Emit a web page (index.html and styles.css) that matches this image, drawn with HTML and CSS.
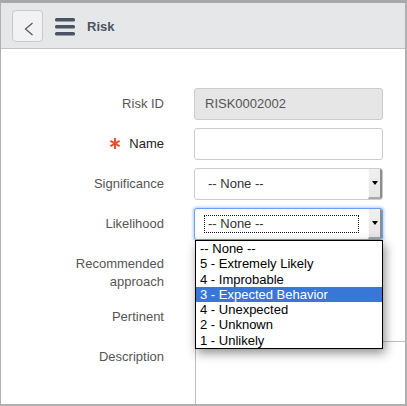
FILE: index.html
```html
<!DOCTYPE html>
<html>
<head>
<meta charset="utf-8">
<link rel="stylesheet" href="styles.css">
</head>
<body>
<div class="frame">
  <header class="header">
    <button class="back" type="button" aria-label="Back">
      <svg width="29" height="30" viewBox="0 0 29 30"><polyline points="19.5,12 12.5,18 19.5,24" fill="none" stroke="#555" stroke-width="1.2"/></svg>
    </button>
    <svg class="burger" width="20" height="18" viewBox="0 0 20 18"><rect x="0" y="0" width="20" height="3.6" rx="1.6" fill="#4a5263"/><rect x="0" y="7" width="20" height="3.6" rx="1.6" fill="#4a5263"/><rect x="0" y="14" width="20" height="3.6" rx="1.6" fill="#4a5263"/></svg>
    <span class="title">Risk</span>
  </header>
  <main class="form">
    <div class="row">
      <div class="label">Risk ID</div>
      <div class="field"><div class="input readonly">RISK0002002</div></div>
    </div>
    <div class="row">
      <div class="label required"><svg class="star" width="10" height="11" viewBox="0 0 10 11"><g stroke="#ea4a2b" stroke-width="1.9" stroke-linecap="butt"><line x1="5" y1="0" x2="5" y2="11"/><line x1="0.4" y1="2.8" x2="9.6" y2="8.2"/><line x1="0.4" y1="8.2" x2="9.6" y2="2.8"/></g></svg>Name</div>
      <div class="field"><div class="input"></div></div>
    </div>
    <div class="row">
      <div class="label">Significance</div>
      <div class="field"><div class="select"><span class="sel-text">-- None --</span><span class="arrow"><i class="tri"></i></span></div></div>
    </div>
    <div class="row">
      <div class="label">Likelihood</div>
      <div class="field">
        <div class="select focused"><span class="sel-text focus-ring">-- None --</span><span class="arrow"><i class="tri"></i></span></div>
        <ul class="dropdown">
          <li>-- None --</li>
          <li>5 - Extremely Likely</li>
          <li>4 - Improbable</li>
          <li class="hl">3 - Expected Behavior</li>
          <li>4 - Unexpected</li>
          <li>2 - Unknown</li>
          <li>1 - Unlikely</li>
        </ul>
      </div>
    </div>
    <div class="row tall">
      <div class="label">Recommended<br>approach</div>
      <div class="field"></div>
    </div>
    <div class="row">
      <div class="label">Pertinent</div>
      <div class="field"></div>
    </div>
    <div class="row">
      <div class="label">Description</div>
      <div class="field"><div class="textarea"></div></div>
    </div>
  </main>
</div>
</body>
</html>
```
FILE: styles.css
```css
html, body {
  margin: 0;
  padding: 0;
  background: #fff;
}
.frame {
  width: 407px;
  height: 406px;
  box-sizing: border-box;
  border-top: 3px solid #a9a9a9;
  border-left: 1px solid #b0b0b0;
  border-right: 2px solid #b0b0b0;
  border-bottom: 2px solid #b0b0b0;
  overflow: hidden;
  font-family: "Liberation Sans", Arial, sans-serif;
  font-size: 13px;
  position: relative;
}
.header {
  height: 45px;
  background: #e6e7e9;
  border-bottom: 1px solid #c3c3c5;
  display: flex;
  align-items: center;
  padding-left: 11px;
  box-sizing: content-box;
}
.back {
  width: 31px;
  height: 32px;
  margin: 0;
  padding: 0;
  border: 1px solid #c9c9cb;
  border-radius: 4px;
  background: #f2f2f4;
  box-sizing: border-box;
  display: block;
}
.back svg { display: block; }
.burger {
  margin-left: 12px;
  margin-top: 2px;
  display: block;
}
.title {
  margin-left: 12px;
  font-weight: bold;
  font-size: 13px;
  color: #4b5466;
  margin-top: 1px;
}
.form {
  padding-top: 39px;
  display: flex;
  flex-direction: column;
  gap: 8px;
}
.row {
  display: flex;
  min-height: 32px;
}
.row.tall { min-height: 45px; }
.label {
  width: 163px;
  flex: none;
  text-align: right;
  padding-top: 7px;
  line-height: 18px;
  color: #555;
  box-sizing: border-box;
}
.label.required {
  color: #222;
  display: flex;
  justify-content: flex-end;
  align-items: flex-start;
}
.star {
  margin-top: 3px;
  margin-right: 9px;
  display: block;
}
.field {
  margin-left: 30px;
  width: 189px;
  flex: none;
  position: relative;
}
.input {
  height: 32px;
  box-sizing: border-box;
  border: 1px solid #cccccc;
  border-radius: 3px;
  background: #fff;
  padding: 6px 10px;
  line-height: 18px;
  color: #555;
}
.input.readonly {
  background: #e6e6e7;
}
.select {
  height: 32px;
  box-sizing: border-box;
  border: 1px solid #cccccc;
  border-radius: 3px;
  background: #fff;
  display: flex;
  position: relative;
}
.sel-text {
  flex: 1;
  padding: 6px 0 0 13px;
  line-height: 18px;
  color: #333;
}
.select.focused {
  border-color: #6b9ff0;
  box-shadow: 0 0 3px 1px rgba(110, 160, 240, 0.55);
}
.focus-ring {
  flex: none;
  width: 155px;
  height: 18px;
  box-sizing: border-box;
  margin: 6px 0 0 9px;
  padding: 0 0 0 3px;
  border: 1px dotted #111;
  line-height: 16px;
}
.arrow {
  margin-left: auto;
  width: 14px;
  background: linear-gradient(#f0f0f0, #e6e6e6);
  border-left: 1px solid #fafafa;
  border-right: 2px solid #8c8c8c;
  border-bottom: 2px solid #a8a8a8;
  box-sizing: border-box;
  display: flex;
  align-items: center;
  justify-content: center;
  border-radius: 0 2px 2px 0;
}
.tri {
  display: block;
  width: 0;
  height: 0;
  border-left: 3px solid transparent;
  border-right: 3px solid transparent;
  border-top: 4px solid #000;
  margin-left: 1px;
}
.dropdown {
  position: absolute;
  left: 1px;
  top: 32px;
  width: 188px;
  margin: 0;
  padding: 0;
  list-style: none;
  background: #fff;
  border: 1px solid #000;
  box-sizing: border-box;
  height: 109px;
  box-shadow: 2px 4px 10px rgba(0, 0, 0, 0.45);
  z-index: 5;
  color: #000;
}
.dropdown li {
  height: 15.3px;
  line-height: 15.3px;
  padding-left: 4px;
  white-space: nowrap;
}
.dropdown li.hl {
  background: #3a76d8;
  color: #fff;
}
.textarea {
  width: 260px;
  height: 100px;
  margin-left: 1px;
  border: 1px solid #bdbdbd;
  box-sizing: border-box;
  background: #fff;
}
```
